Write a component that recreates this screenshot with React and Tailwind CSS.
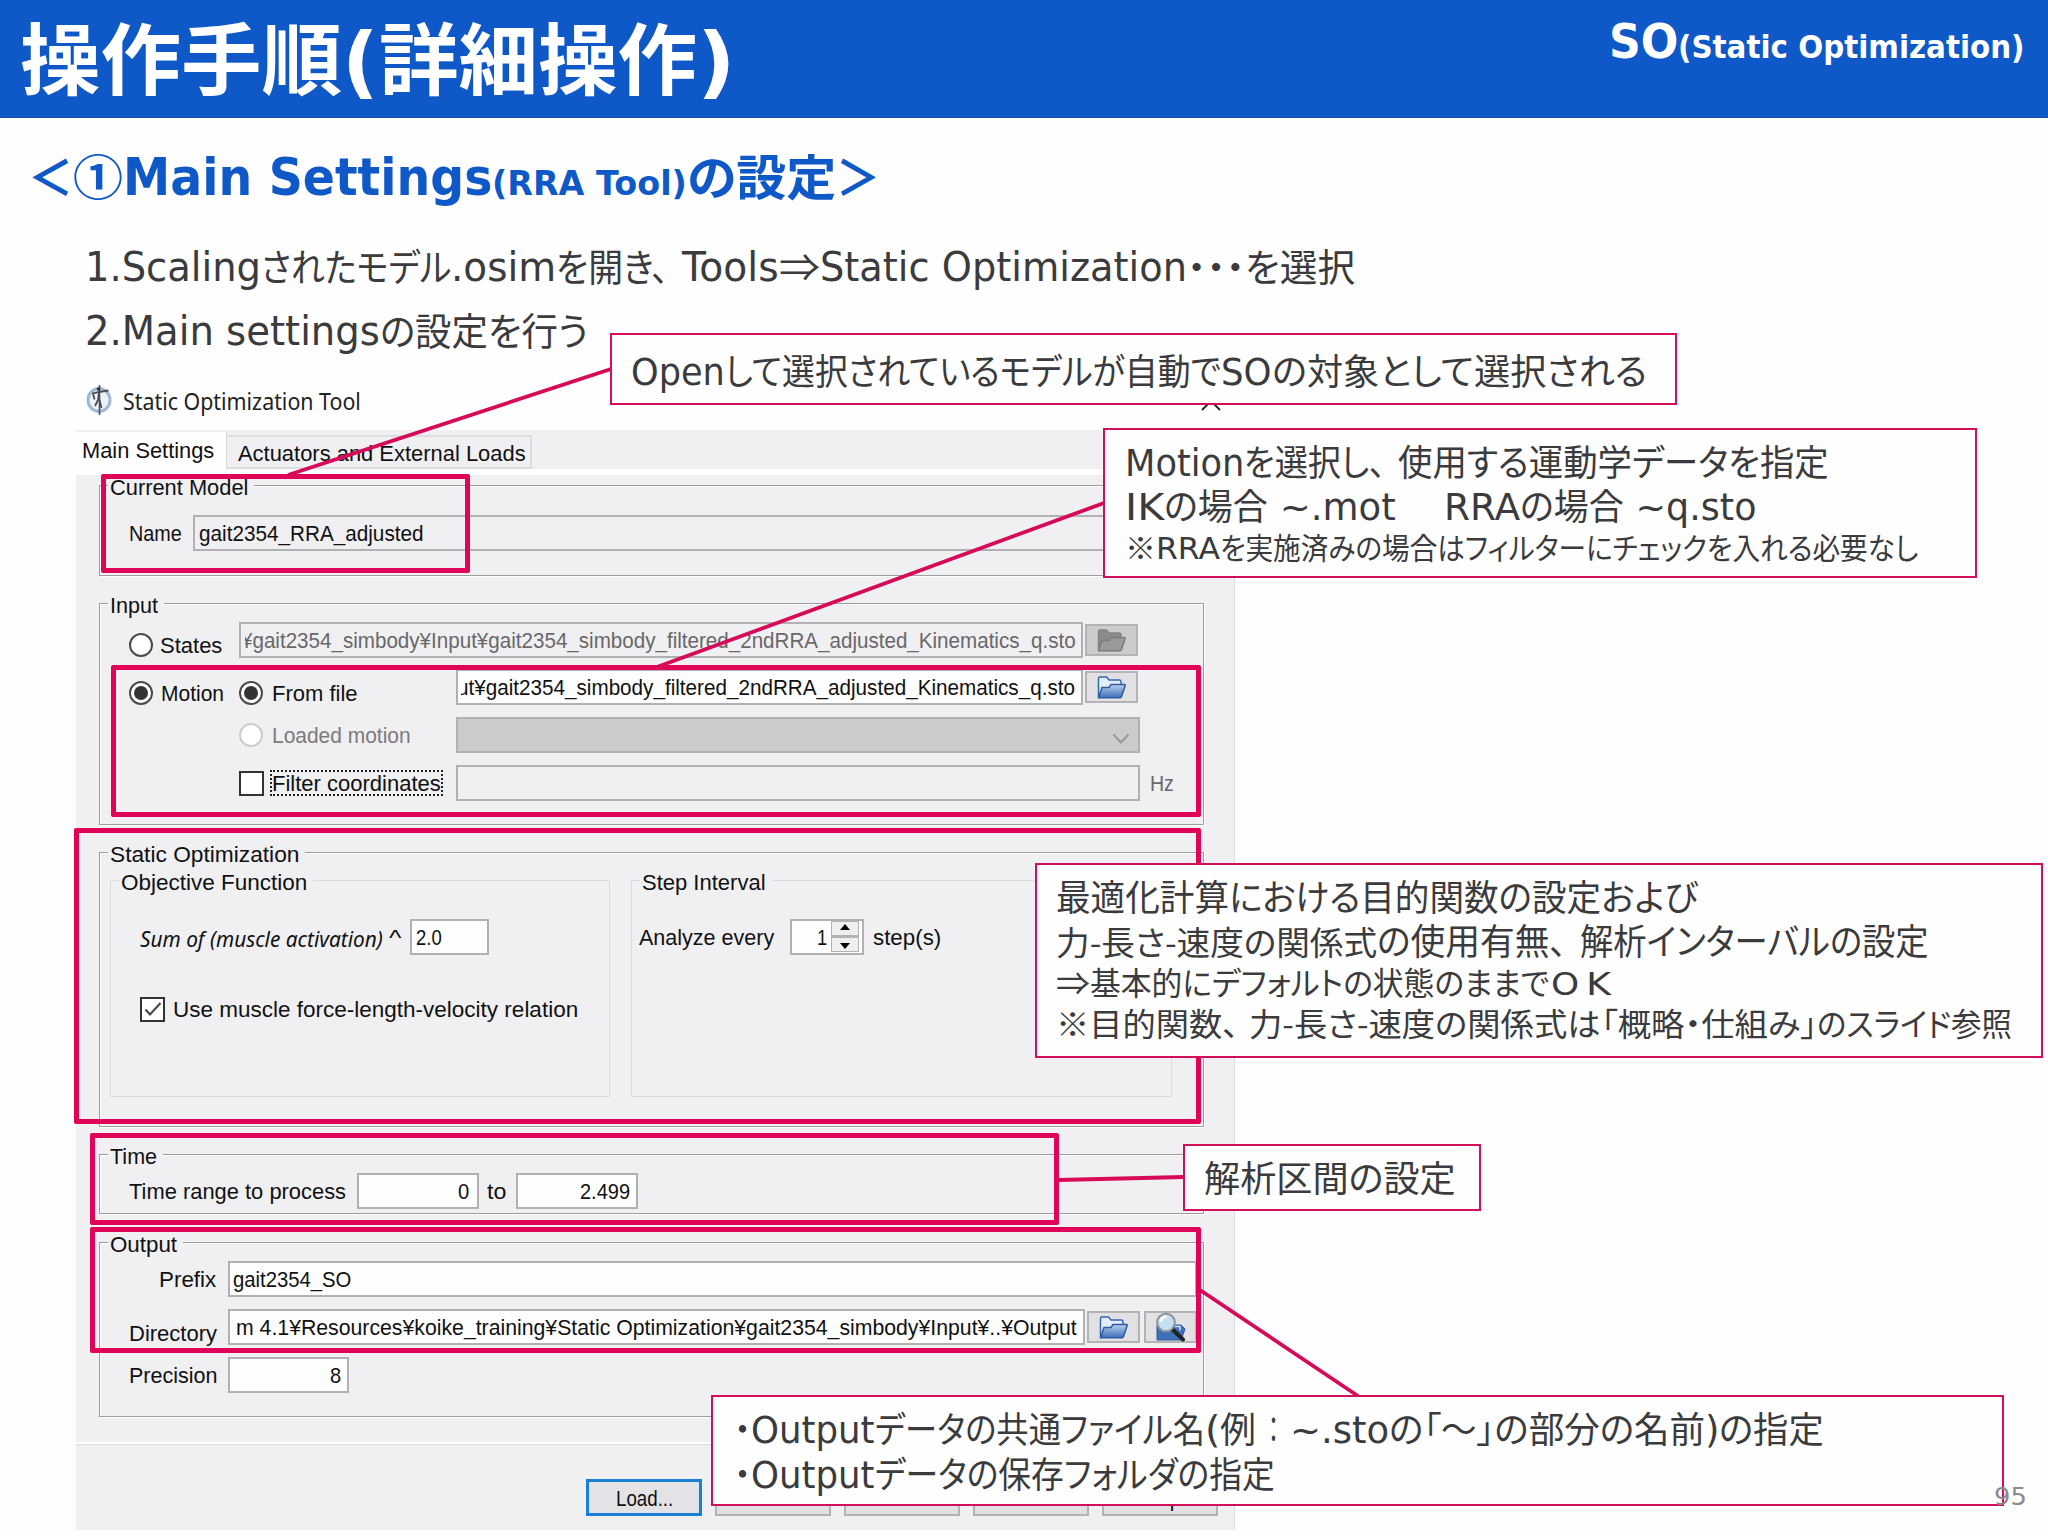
import React, { useLayoutEffect, useRef, useState } from "react";
import clsx from "clsx";

const LATIN = "font-['DejaVu_Sans','Noto_Sans_CJK_JP',sans-serif]";
const KANA = "font-['Noto_Sans_CJK_JP',sans-serif] [font-feature-settings:'palt']";

/* One line of text, stretched or squeezed horizontally to a given width. */
const Fit = ({ w, className, children }) => {
  const ref = useRef(null);
  const [scale, setScale] = useState(1);

  useLayoutEffect(() => {
    const natural = ref.current.offsetWidth;
    if (natural) setScale(w / natural);
  }, [w, children]);

  return (
    <span className={clsx("inline-block shrink-0 whitespace-pre", className)} style={{ width: w }}>
      <span ref={ref} className="inline-block origin-left" style={{ transform: `scaleX(${scale})` }}>
        {children}
      </span>
    </span>
  );
};

/* runs: [text, width, isJapanese], or a plain number for a gap */
const Line = ({ runs, latin, kana, className }) => (
  <div className={clsx("flex items-baseline", className)}>
    {runs.map((run, i) => {
      if (typeof run === "number") return <span key={i} className="shrink-0" style={{ width: run }} />;
      const [text, w, jp] = run;
      return (
        <Fit key={i} w={w} className={jp ? clsx(KANA, kana) : clsx(LATIN, latin)}>
          {text}
        </Fit>
      );
    })}
  </div>
);

const Callout = ({ className, children }) => (
  <div className={clsx("absolute border-2 border-[#d30f5b] bg-[#fefefe] text-[#3b3b3d]", className)}>
    {children}
  </div>
);

const Highlight = ({ className }) => (
  <div className={clsx("absolute rounded-[2px] border-5 border-[#e00459]", className)} />
);

/* ── Dialog controls ── */

const T = ({ w, className, children }) => (
  <Fit w={w} className={clsx("pt-0.5 leading-[24px]", className)}>
    {children}
  </Fit>
);

const Group = ({ title, w, light, className, children }) => (
  <div
    className={clsx(
      "border",
      light
        ? "border-[#dcdbdd]"
        : "border-[#9d9c9e] shadow-[1px_1px_0_#fff,inset_1px_1px_0_#fff]",
      className
    )}
  >
    <div className="-mt-3 ml-2 flex h-[25px]">
      <span className="flex bg-[#f0eff1] pr-1.5 pl-0.5">
        <T w={w}>{title}</T>
      </span>
    </div>
    {children}
  </div>
);

const Field = ({ className, children }) => (
  <div className={clsx("flex h-9 shrink-0 items-center border-2 border-[#b1b0b2]", className)}>{children}</div>
);

const Radio = ({ checked, disabled }) => (
  <span
    className={clsx(
      "flex size-6 shrink-0 items-center justify-center rounded-full border-2 bg-white",
      disabled ? "border-[#cccbcd]" : "border-[#4a4a4a]"
    )}
  >
    {checked && <span className="size-3.5 rounded-full bg-[#333]" />}
  </span>
);

const Checkbox = ({ checked }) => (
  <span className="flex size-[25px] shrink-0 items-center justify-center border-2 border-[#333] bg-white">
    {checked && (
      <svg viewBox="0 0 20 20" className="size-5" fill="none" stroke="#444" strokeWidth="2">
        <path d="M2.5 10.5 7 15.5 17.5 4" />
      </svg>
    )}
  </span>
);

const Folder = ({ disabled }) => (
  <svg viewBox="0 0 29 23" className="h-[23px] w-[29px]">
    <defs>
      <linearGradient id="folder-blue" x1="0" y1="0" x2="0" y2="1">
        <stop offset="0" stopColor="#b9d0ee" />
        <stop offset="1" stopColor="#3d70b8" />
      </linearGradient>
    </defs>
    <path
      d="M1.5 21V2.5Q1.5 1 3 1h6.5l2.5 3h10.5q1.5 0 1.5 1.5V8"
      fill={disabled ? "#8b8b8b" : "#e4eefb"}
      stroke={disabled ? "#858585" : "#3567ae"}
      strokeWidth="1.5"
    />
    <path
      d="M1.5 21.5 5 11.5h7l2-3h13.5q1 0 .6 1.2L24.5 20.5q-.4 1.2-1.5 1.2H1.5Z"
      fill={disabled ? "#9a9a9a" : "url(#folder-blue)"}
      stroke={disabled ? "#7d7d7d" : "#2c5a9e"}
      strokeWidth="1.5"
    />
  </svg>
);

const SearchFolder = () => (
  <svg viewBox="0 0 31 30" className="h-[30px] w-[31px]">
    <path d="M2 28V13h24l4 4-4 11Z" fill="#3f70b6" stroke="#2c5a9e" />
    <path d="M20 14.5h5v4" fill="none" stroke="#cfe0f5" strokeWidth="1.5" />
    <path d="m17 17 11 10.5" stroke="#222" strokeWidth="4" strokeLinecap="round" />
    <circle cx="11" cy="10.5" r="8.8" fill="#c5e0ee" stroke="#8d9499" strokeWidth="2" />
    <path d="M5.5 10q1-5 6-5.5" fill="none" stroke="#fff" strokeWidth="2.5" />
  </svg>
);

const IconButton = ({ className, children }) => (
  <div
    className={clsx(
      "flex h-8 w-[53px] shrink-0 items-center justify-center border-2 border-[#b3b2b4]",
      className
    )}
  >
    {children}
  </div>
);

const TitleBar = () => (
  <div className="flex h-[63px] items-center bg-[#fefefe] pt-0.5 pl-[9px]">
    <svg viewBox="0 0 28 32" className="h-8 w-7" fill="none">
      <ellipse cx="14" cy="16" rx="11" ry="11.5" fill="#eef2f8" stroke="#a3b7d8" strokeWidth="3" />
      <path d="M14.5 1v30" stroke="#4a4e55" strokeWidth="1.6" />
      <circle cx="13.5" cy="5" r="1.8" fill="#333" />
      <path d="M23.5 6.5 14 8 8 9.5l1.500 6M14 8l-1 8-3 6M14.500 16l2 8" stroke="#4a4d53" strokeWidth="1.8" />
    </svg>
    <T w={238} className="ml-[10px] font-['Noto_Sans',sans-serif] text-[23px] text-[#222]">
      Static Optimization Tool
    </T>
    <svg viewBox="0 0 20 20" className="mt-0.5 mr-[14px] ml-auto size-5" stroke="#222" strokeWidth="1.8">
      <path d="M1 1l18 18M19 1 1 19" />
    </svg>
  </div>
);

const Tabs = () => (
  <div className="flex h-[45px] items-start border-b-6 border-[#fefefe] bg-[#f0eff1]">
    <div className="mt-0.5 flex h-[38px] w-[151px] items-start border-r border-[#dad9db] bg-[#fefefe] pt-[5px] pl-1.5">
      <T w={132}>Main Settings</T>
    </div>
    <div className="mt-[5px] flex h-[34px] w-[305px] items-start border-2 border-l-0 border-[#dddcde] pt-[3px] pl-[11px]">
      <T w={288}>Actuators and External Loads</T>
    </div>
  </div>
);

const StaticOptimizationTool = () => (
  <div className="ml-[76px] w-[1159px] font-['Liberation_Sans','Noto_Sans_CJK_JP',sans-serif] text-[22px] text-[#111]">
    <TitleBar />
    <Tabs />

    <div className="h-[967px] border-r border-[#dcdbdd] bg-[#f0eff1] pt-[10px] pl-[23px]">
      <Group title="Current Model" w={138} className="h-[91px] w-[1105px]">
        <div className="mt-4 ml-[29px] flex h-9 items-center">
          <T w={53}>Name</T>
          <Field className="ml-[11px] w-[996px] pl-1">
            <T w={225}>gait2354_RRA_adjusted</T>
          </Field>
        </div>
      </Group>

      <Group title="Input" w={48} className="mt-[27px] h-[222px] w-[1105px]">
        <div className="mt-[5px] flex h-9 items-center">
          <div className="mt-2.5 flex w-[139px] items-center pl-[29px]">
            <Radio />
            <T w={62} className="ml-[7px]">States</T>
          </div>
          <Field className="w-[844px] pl-1">
            <div className="flex w-[831px] justify-end overflow-hidden text-[#69686a]">
              <T w={835}>¥gait2354_simbody¥Input¥gait2354_simbody_filtered_2ndRRA_adjusted_Kinematics_q.sto</T>
            </div>
          </Field>
          <IconButton className="ml-0.5 bg-[#cccbcd]">
            <Folder disabled />
          </IconButton>
        </div>

        <div className="mt-[11px] flex h-9 items-center">
          <div className="mt-3 flex w-[139px] items-center pl-[29px]">
            <Radio checked />
            <T w={63} className="ml-[8px]">Motion</T>
          </div>
          <div className="mt-3 flex w-[217px] items-center">
            <Radio checked />
            <T w={86} className="ml-[9px]">From file</T>
          </div>
          <Field className="w-[627px] bg-[#fefefe] pl-[3px]">
            <div className="flex w-[614px] justify-end overflow-hidden">
              <T w={618}>ut¥gait2354_simbody_filtered_2ndRRA_adjusted_Kinematics_q.sto</T>
            </div>
          </Field>
          <IconButton className="ml-0.5 bg-[#e1e0e2]">
            <Folder />
          </IconButton>
        </div>

        <div className="mt-3 flex h-9 items-center">
          <div className="ml-[139px] flex w-[217px] items-center text-[#7c7b7d]">
            <Radio disabled />
            <T w={139} className="ml-[9px]">Loaded motion</T>
          </div>
          <Field className="w-[684px] justify-end bg-[#cbcacc] pr-2">
            <svg viewBox="0 0 18 12" className="mt-2 h-3 w-[18px]" fill="none" stroke="#9a999b" strokeWidth="2">
              <path d="m1.5 1.5 7.5 8 7.5-8" />
            </svg>
          </Field>
        </div>

        <div className="mt-3 flex h-9 items-center">
          <div className="ml-[139px] flex w-[217px] items-center">
            <Checkbox />
            <div className="ml-1.5 flex h-[26px] items-center border-2 border-dotted border-[#222]">
              <T w={169}>Filter coordinates</T>
            </div>
          </div>
          <Field className="w-[684px]" />
          <T w={24} className="ml-2.5 text-[#69686a]">Hz</T>
        </div>
      </Group>

      <Group title="Static Optimization" w={189} className="mt-[27px] h-[275px] w-[1105px]">
        <div className="mt-[14px] ml-[10px] flex gap-[21px]">
          <Group light title="Objective Function" w={186} className="h-[217px] w-[500px]">
            <div className="mt-6 ml-[29px] flex h-[37px] items-center">
              <T w={243} className="font-['Noto_Sans',sans-serif] italic">Sum of (muscle activation)</T>
              <T w={12} className="ml-[6px]">^</T>
              <Field className="ml-[9px] w-[79px] bg-[#fefefe] pl-1">
                <T w={26}>2.0</T>
              </Field>
            </div>
            <div className="mt-[42px] ml-[29px] flex h-6 items-center">
              <Checkbox checked />
              <T w={405} className="ml-2">Use muscle force-length-velocity relation</T>
            </div>
          </Group>

          <Group light title="Step Interval" w={124} className="h-[217px] w-[541px]">
            <div className="mt-6 ml-[7px] flex h-[37px] items-center">
              <T w={135}>Analyze every</T>
              <Field className="ml-4 w-[74px] justify-end bg-[#fefefe] pr-[3px]">
                <T w={10} className="mr-1">1</T>
                <div className="flex h-[31px] w-7 flex-col items-center justify-around border border-[#b3b2b4] bg-[#efeef0]">
                  <span className="border-x-5 border-b-6 border-x-transparent border-b-black" />
                  <span className="h-[3px] w-full bg-[#b3b2b4]" />
                  <span className="border-x-5 border-t-6 border-x-transparent border-t-black" />
                </div>
              </Field>
              <T w={68} className="ml-[9px]">step(s)</T>
            </div>
          </Group>
        </div>
      </Group>

      <Group title="Time" w={47} className="mt-[27px] h-[60px] w-[1105px]">
        <div className="mt-[5px] ml-[29px] flex h-9 items-center">
          <T w={217}>Time range to process</T>
          <Field className="ml-[11px] w-[122px] justify-end bg-[#fefefe] pr-2">
            <T w={11}>0</T>
          </Field>
          <T w={19} className="ml-2">to</T>
          <Field className="ml-[10px] w-[122px] justify-end bg-[#fefefe] pr-1.5">
            <T w={50}>2.499</T>
          </Field>
        </div>
      </Group>

      <Group title="Output" w={67} className="mt-7 h-[175px] w-[1105px]">
        <div className="mt-[5px] flex h-9 items-center">
          <T w={57} className="ml-[59px]">Prefix</T>
          <Field className="ml-3 w-[969px] bg-[#fefefe] pl-[3px]">
            <T w={118}>gait2354_SO</T>
          </Field>
        </div>
        <div className="mt-3 flex h-9 items-center">
          <T w={88} className="mt-3 ml-[29px]">Directory</T>
          <Field className="ml-[11px] w-[857px] bg-[#fefefe] pl-1.5">
            <T w={841}>m 4.1¥Resources¥koike_training¥Static Optimization¥gait2354_simbody¥Input¥..¥Output</T>
          </Field>
          <IconButton className="ml-0.5 bg-[#e1e0e2]">
            <Folder />
          </IconButton>
          <IconButton className="ml-1 bg-[#e1e0e2]">
            <SearchFolder />
          </IconButton>
        </div>
        <div className="mt-3 flex h-9 items-center">
          <T w={88} className="ml-[29px]">Precision</T>
          <Field className="ml-[11px] w-[121px] justify-end bg-[#fefefe] pr-1.5">
            <T w={11}>8</T>
          </Field>
        </div>
      </Group>
    </div>

    <div className="flex h-[88px] items-start gap-[13px] border-t-2 border-r border-t-white border-r-[#dcdbdd] bg-[#f0eff1] pt-[35px] pl-[510px] shadow-[inset_0_1px_0_#d9d8da]">
      <div className="flex h-[37px] w-[116px] items-center justify-center border-3 border-[#1a7fd6] bg-[#e3e3e6]">
        <T w={57}>Load...</T>
      </div>
      <div className="h-[37px] w-[116px] border-2 border-[#b3b2b4] bg-[#e1e0e2]" />
      <div className="h-[37px] w-[116px] border-2 border-[#b3b2b4] bg-[#e1e0e2]" />
      <div className="h-[37px] w-[116px] border-2 border-[#b3b2b4] bg-[#e1e0e2]" />
      <div className="flex h-[37px] w-[116px] items-center justify-center border-2 border-[#b3b2b4] bg-[#e1e0e2]">
        <T w={42}>Help</T>
      </div>
    </div>
  </div>
);

/* Pink frames, connector lines and the explanation boxes that lie over the dialog. */
const Annotations = () => (
  <>
    <Highlight className="top-[474px] left-[101px] h-[99px] w-[369px]" />
    <Highlight className="top-[665px] left-[111px] h-[152px] w-[1090px]" />
    <Highlight className="top-[828px] left-[74px] h-[296px] w-[1127px]" />
    <Highlight className="top-[1133px] left-[90px] h-[92px] w-[969px]" />
    <Highlight className="top-[1227px] left-[90px] h-[126px] w-[1111px]" />

    <svg className="absolute inset-0 h-[1536px] w-[2048px]" fill="none" stroke="#d60a58" strokeWidth="3.8">
      <path d="M611 369 288 475M1104 503 657 667M1184 1177 1058 1180M1200 1290 1358 1396" />
    </svg>

    <Callout className="top-[333px] left-[610px] h-[72px] w-[1067px] pt-3 pl-[19px]">
      <Line
        className="h-11"
        latin="text-[37px] leading-[44px]"
        kana="text-[36px] leading-[44px]"
        runs={[
          ["Open", 94],
          ["して選択されているモデルが自動で", 496, true],
          ["SO", 51],
          ["の対象として選択される", 375, true],
        ]}
      />
    </Callout>

    <Callout className="top-[428px] left-[1103px] h-[150px] w-[874px] pt-2 pl-5">
      <Line
        className="h-11"
        latin="text-[37px] leading-[44px]"
        kana="text-[36px] leading-[44px]"
        runs={[
          ["Motion", 119],
          ["を選択し、", 142, true],
          12,
          ["使用する運動学データを指定", 431, true],
        ]}
      />
      <Line
        className="h-11"
        latin="text-[37px] leading-[44px]"
        kana="text-[36px] leading-[44px]"
        runs={[
          ["IK", 39],
          ["の場合", 104, true],
          [" ~.mot", 128],
          ["　", 48, true],
          ["RRA", 76],
          ["の場合", 104, true],
          [" ~q.sto", 132],
        ]}
      />
      <Line
        className="h-[38px] pt-px"
        latin="text-[30px] leading-[38px]"
        kana="text-[30px] leading-[38px]"
        runs={[
          ["※", 31, true],
          ["RRA", 64],
          ["を実施済みの場合はフィルターにチェックを入れる必要なし", 698, true],
        ]}
      />
    </Callout>

    <Callout className="top-[863px] left-[1035px] h-[195px] w-[1008px] pt-2 pl-[19px]">
      <Line
        className="h-11"
        kana="text-[36px] leading-[44px]"
        runs={[["最適化計算における目的関数の設定および", 642, true]]}
      />
      <div className="flex h-11 items-baseline">
        <Line kana="text-[33px] leading-[44px]" runs={[["力-長さ-速度の関係式", 321, true]]} />
        <Line
          kana="text-[36px] leading-[44px]"
          runs={[["の使用有無、", 190, true], 13, ["解析インターバルの設定", 349, true]]}
        />
      </div>
      <Line
        className="h-[41px]"
        kana="text-[32px] leading-[41px]"
        latin="text-[32px] leading-[41px]"
        runs={[["⇒", 34, true], ["基本的にデフォルトの状態のままで", 459, true], 2, ["O", 28], 7, ["K", 25]]}
      />
      <Line
        className="h-[41px]"
        kana="text-[32px] leading-[41px]"
        runs={[
          ["※目的関数、", 183, true],
          10,
          ["力-長さ-速度の関係式は", 352, true],
          ["「概略・仕組み」", 216, true],
          ["のスライド参照", 195, true],
        ]}
      />
    </Callout>

    <Callout className="top-[1144px] left-[1183px] h-[67px] w-[298px] pt-2 pl-[19px]">
      <Line className="h-11" kana="text-[36px] leading-[44px]" runs={[["解析区間の設定", 252, true]]} />
    </Callout>

    <Callout className="top-[1395px] left-[711px] h-[111px] w-[1293px] pt-2 pl-[21px]">
      <Line
        className="h-[45px]"
        latin="text-[37px] leading-[44px]"
        kana="text-[36px] leading-[44px]"
        runs={[
          ["・", 17, true],
          ["Output", 124],
          ["データの共通ファイル名", 330, true],
          ["(", 15],
          ["例", 36, true],
          12,
          ["：", 11, true],
          11,
          ["~.sto", 99],
          ["の「～」の部分の名前", 316, true],
          [")", 14],
          ["の指定", 105, true],
        ]}
      />
      <Line
        className="h-11"
        latin="text-[37px] leading-[44px]"
        kana="text-[36px] leading-[44px]"
        runs={[
          ["・", 17, true],
          ["Output", 124],
          ["データの保存フォルダの指定", 400, true],
        ]}
      />
    </Callout>

    <div className="absolute top-[1481px] left-[1994px] text-[#8b8b8d]">
      <Line latin="text-[25px] leading-[32px]" runs={[["95", 33]]} />
    </div>
  </>
);

const App = () => (
  <div className="relative h-[1536px] w-[2048px] overflow-hidden bg-[#fefefe]">
    <header className="flex h-[118px] items-start justify-between border-b border-[#1a4fa5] bg-[#0f58c7] text-white">
      <Line
        className="pt-[15px] pl-5 font-bold"
        kana="text-[78px] leading-[80px]"
        latin="text-[78px] leading-[80px]"
        runs={[
          ["操作手順", 322, true],
          ["(", 37],
          ["詳細操作", 318, true],
          [")", 39],
        ]}
      />
      <div className="flex items-baseline pt-[11px] pr-[23px] font-bold">
        <Line latin="text-[48px] leading-[60px]" runs={[["SO", 69]]} />
        <Line latin="text-[32px] leading-[60px]" runs={[["(Static Optimization)", 347]]} />
      </div>
    </header>

    <div className="flex h-[123px] items-baseline pt-[26px] pl-7 font-bold text-[#0f58c7]">
      <Line
        kana="text-[48px] leading-[60px]"
        latin="text-[51px] leading-[60px]"
        runs={[["＜", 45, true], ["①", 50, true], ["Main Settings", 369]]}
      />
      <Line
        kana="text-[48px] leading-[60px]"
        latin="text-[33px] leading-[60px]"
        runs={[["(RRA Tool)", 195], ["の設定", 149, true], ["＞", 44, true]]}
      />
    </div>

    <Line
      className="h-16 pl-[85px] text-[#3b3b3d]"
      latin="text-[40px] leading-[48px]"
      kana="text-[38px] leading-[48px]"
      runs={[
        ["1.Scaling", 176],
        ["されたモデル", 190, true],
        [".osim", 105],
        ["を開き、", 113, true],
        13,
        ["Tools", 97],
        ["⇒", 41, true],
        ["Static Optimization", 367],
        ["・・・", 58, true],
        ["を選択", 110, true],
      ]}
    />
    <Line
      className="h-[62px] pl-[85px] text-[#3b3b3d]"
      latin="text-[40px] leading-[48px]"
      kana="text-[38px] leading-[48px]"
      runs={[["2.Main settings", 295], ["の設定を行う", 208, true]]}
    />

    <StaticOptimizationTool />
    <Annotations />
  </div>
);

export default App;
